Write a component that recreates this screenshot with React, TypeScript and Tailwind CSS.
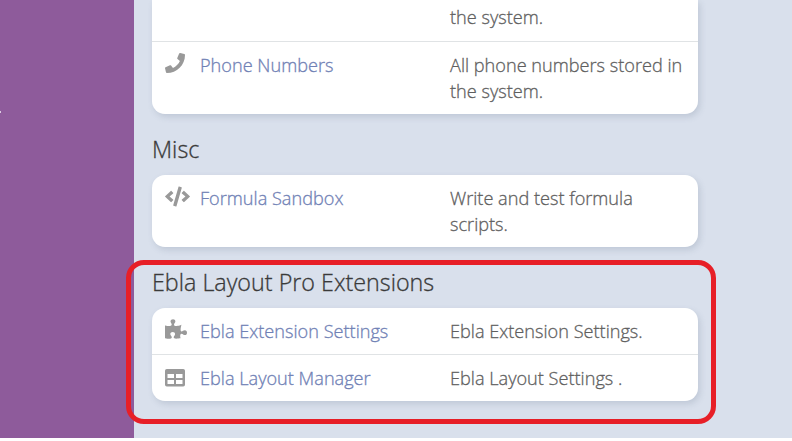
import type { ReactNode } from "react";
import { FaCode, FaPhone, FaPuzzlePiece } from "react-icons/fa";

function TableIcon() {
  return (
    <svg className="mt-1 h-[18px] w-5" viewBox="0 0 20 18" fill="currentColor" fillRule="evenodd">
      <path d="M1.8 0h16.4A1.8 1.8 0 0 1 20 1.8v13.9a1.8 1.8 0 0 1-1.8 1.8H1.8A1.8 1.8 0 0 1 0 15.700V1.800A1.800 1.800 0 0 1 1.800 0ZM2.500 5v4h6.500V5ZM11 5v4h6.500V5ZM2.500 11v4h6.500v-4ZM11 11v4h6.500v-4Z" />
    </svg>
  );
}

function Row({ icon, name, children, tall }: { icon?: ReactNode; name?: string; children: ReactNode; tall?: boolean }) {
  return (
    <div className={`flex border-t border-[#e0e3e5] pt-[10px] first:border-t-0 ${tall ? "h-[73px]" : "h-[47px] first:h-[46px]"}`}>
      <div className="flex w-12 shrink-0 pl-[13px] text-[#999999]">{icon}</div>
      <div className="w-[250px] shrink-0 text-[#7081b5]">{name}</div>
      <div className="w-[240px] shrink-0 text-[#5f5f5f]">{children}</div>
    </div>
  );
}

function Card({ children, className = "" }: { children: ReactNode; className?: string }) {
  return (
    <div className={`w-[546px] overflow-hidden rounded-[13px] bg-white shadow-[2px_3px_6px_rgba(90,105,130,0.2)] ${className}`}>
      {children}
    </div>
  );
}

function Heading({ children }: { children: ReactNode }) {
  return <h4 className="flex h-[61px] items-center pt-2 text-[23.3px] font-light leading-8 text-[#3a3a3a]">{children}</h4>;
}

export default function App() {
  return (
    <div className="h-[441px] w-[792px] bg-white">
      <div className="relative flex h-[438px] overflow-hidden bg-[#d9e0ec] font-['Open_Sans',sans-serif] text-[18.15px] font-light leading-[26px] [-webkit-text-stroke:0.3px]">
        <aside className="relative w-[134px] shrink-0 bg-[#8e5b9b]">
          <span className="absolute left-0 top-[111px] h-[2px] w-px bg-[#dccce2]" />
        </aside>
        <main className="pl-[18px]">
          <Card className="h-[114px] rounded-t-none">
            <div className="flex h-[41px] pl-[298px] pt-[4px] text-[#5f5f5f]">the system.</div>
            <div className="border-t border-[#e0e3e5]">
              <Row icon={<FaPhone size={20} className="mt-px" />} name="Phone Numbers" tall>
                All phone numbers stored in the system.
              </Row>
            </div>
          </Card>
          <Heading>Misc</Heading>
          <Card className="h-[72px]">
            <Row icon={<FaCode size={25} className="-mt-px" />} name="Formula Sandbox" tall>
              Write and test formula scripts.
            </Row>
          </Card>
          <Heading>Ebla Layout Pro Extensions</Heading>
          <Card className="h-[93px]">
            <Row icon={<FaPuzzlePiece size={22} />} name="Ebla Extension Settings">
              Ebla Extension Settings.
            </Row>
            <Row icon={<TableIcon />} name="Ebla Layout Manager">
              Ebla Layout Settings .
            </Row>
          </Card>
        </main>
        <div className="absolute left-[126px] top-[260px] h-[164px] w-[590px] rounded-[18px] border-[5px] border-[#e71f27]" />
      </div>
    </div>
  );
}
